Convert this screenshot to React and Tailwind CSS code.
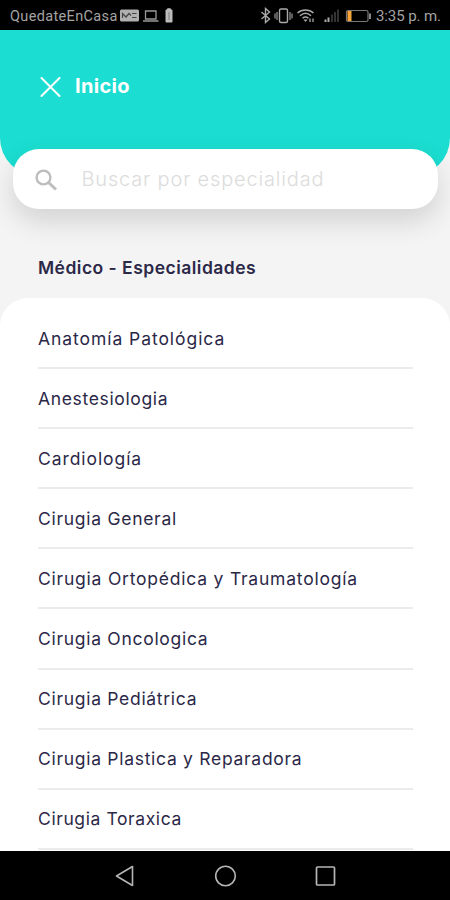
const specialties = [
    { name: 'Anatomía Patológica', tracking: 'tracking-[0.94px]' },
    { name: 'Anestesiologia', tracking: 'tracking-[0.65px]' },
    { name: 'Cardiología', tracking: 'tracking-[0.93px]' },
    { name: 'Cirugia General', tracking: 'tracking-[0.72px]' },
    { name: 'Cirugia Ortopédica y Traumatología', tracking: 'tracking-[0.78px]' },
    { name: 'Cirugia Oncologica', tracking: 'tracking-[0.71px]' },
    { name: 'Cirugia Pediátrica', tracking: 'tracking-[0.7px]' },
    { name: 'Cirugia Plastica y Reparadora', tracking: 'tracking-[0.71px]' },
    { name: 'Cirugia Toraxica', tracking: 'tracking-[0.6px]' },
]

function StatusBar() {
    return (
        <div className="flex h-[30px] shrink-0 items-center bg-black pt-[2px] pl-[10px] font-['Roboto',sans-serif] text-[#a3a3a3]">
            <span className="w-[109px] pt-px whitespace-nowrap text-[14.5px] tracking-[0.35px]">QuedateEnCasa</span>
            <svg className="ml-[1px]" width="60" height="18" viewBox="0 0 60 18" fill="none">
                <rect x="0" y="2.500" width="19" height="12" rx="1.500" fill="#b0b0b0" />
                <path d="M2.500 11V6.500L6 10l3-3.500 2 2M12 6.500h4.500M12 10.500h4.500" stroke="#444" strokeWidth="1.200" />
                <path d="M25.500 4h10.500v8H25.500zM23 14h15.500" stroke="#999" strokeWidth="1.300" />
                <path d="M47.500 3V1.800h3V3h1.500v12h-6V3z" fill="#bbb" stroke="#bbb" strokeWidth="1" strokeLinejoin="round" />
                <path d="M49 5v8" stroke="#888" strokeWidth="1.200" />
            </svg>
            <svg className="ml-[79px]" width="115" height="18" viewBox="0 0 115 18" fill="none">
                <path d="M2.500 5l8 7L6.500 15.500V1.500l4 3.500-8 7" stroke="#aaa" strokeWidth="1.400" />
                <rect x="20.500" y="2" width="8" height="13.500" rx="1.500" stroke="#aaa" strokeWidth="1.400" />
                <path d="M18 5v8M31 5v8M16 6.500v5M33 6.500v5" stroke="#999" strokeWidth="1.200" />
                <path d="M38.500 6C43 2 50 2 54.500 6M41 8.700C44.500 5.500 48.500 5.500 52 8.700M43.500 11.200C45.500 9.500 47.500 9.500 49.500 11.200" stroke="#aaa" strokeWidth="1.500" />
                <path d="M44.500 12.500h4l-2 2.500z" fill="#aaa" />
                <path d="M51 11.500v3.500M54 11.500v3.500" stroke="#aaa" strokeWidth="1.300" />
                <path d="M66.500 15v-2.500M69.500 15v-4.500" stroke="#aaa" strokeWidth="2" />
                <path d="M73 15V7.500M76 15V5M79 15V2.500" stroke="#3b3b3b" strokeWidth="1.700" />
                <rect x="87.500" y="3.500" width="21.500" height="11" rx="1.500" stroke="#777" strokeWidth="1.200" />
                <path d="M111 6.500v5.500" stroke="#aaa" strokeWidth="1.600" />
                <rect x="88.500" y="4" width="4" height="10" fill="#f6a33a" />
            </svg>
            <span className="ml-[2px] whitespace-nowrap text-[15px] tracking-[-0.1px]">3:35 p. m.</span>
        </div>
    )
}

function Header() {
    return (
        <header className="flex h-[146px] shrink-0 items-start rounded-b-[38px] bg-[#1bddd1] pt-[42px] pl-[40px] text-white">
            <svg className="mt-[5px]" width="21" height="20" viewBox="0 0 21 20" fill="none">
                <path d="M1.500 1l18 18M19.500 1l-18 18" stroke="currentColor" strokeWidth="2" strokeLinecap="round" />
            </svg>
            <h1 className="ml-[14px] text-[20px] leading-[28px] font-bold tracking-[0.3px]">Inicio</h1>
        </header>
    )
}

function SearchBox() {
    return (
        <div className="relative mx-[12.5px] -mt-[27px] flex h-[60px] shrink-0 items-center rounded-[26px] bg-white pl-[22px] shadow-[0_12px_28px_rgba(0,0,0,0.14)]">
            <svg className="mt-[2px]" width="23" height="22" viewBox="0 0 23 22" fill="none" stroke="#bdbdbd">
                <circle cx="8.500" cy="8.500" r="6.900" strokeWidth="2.400" />
                <path d="M13.500 13.500l7.500 7" strokeWidth="2.900" />
            </svg>
            <span className="ml-[24px] whitespace-nowrap text-[20px] font-light tracking-[0.83px] text-[#dcdcdc]">Buscar por especialidad</span>
        </div>
    )
}

function SpecialtyList() {
    return (
        <ul className="min-h-0 flex-1 overflow-hidden rounded-t-[28px] bg-white pr-[37px] pl-[38px] pt-[11px]">
            {specialties.map(({ name, tracking }) => (
                <li key={name} className="flex h-[60.1px] items-center border-b-2 border-[#ebebec] pt-[1.5px]">
                    <span className={`whitespace-nowrap text-[17.5px] text-[#2b2848] ${tracking}`}>{name}</span>
                </li>
            ))}
        </ul>
    )
}

function NavigationBar() {
    return (
        <nav className="flex h-[49px] shrink-0 items-center justify-center gap-[76px] bg-black text-[#b5b5b5]">
            <svg width="24" height="24" viewBox="0 0 24 24" fill="none" stroke="currentColor" strokeWidth="1.600" strokeLinejoin="round">
                <path d="M19.500 2.500v19L3.500 12z" />
            </svg>
            <svg width="24" height="24" viewBox="0 0 24 24" fill="none" stroke="currentColor" strokeWidth="1.600">
                <circle cx="12.500" cy="12" r="9.800" />
            </svg>
            <svg width="24" height="24" viewBox="0 0 24 24" fill="none" stroke="currentColor" strokeWidth="1.700">
                <rect x="3.500" y="3" width="18" height="18" rx="1" />
            </svg>
        </nav>
    )
}

export default function App() {
    return (
        <div className="flex h-screen w-full flex-col overflow-hidden bg-[#f4f4f4] font-['Inter',sans-serif]">
            <StatusBar />
            <Header />
            <SearchBox />
            <h2 className="mt-[45px] mb-[16px] shrink-0 pl-[38px] text-[17.5px] leading-[28px] font-semibold tracking-[0.48px] text-[#2b2848]">
                Médico - Especialidades
            </h2>
            <SpecialtyList />
            <NavigationBar />
        </div>
    )
}
